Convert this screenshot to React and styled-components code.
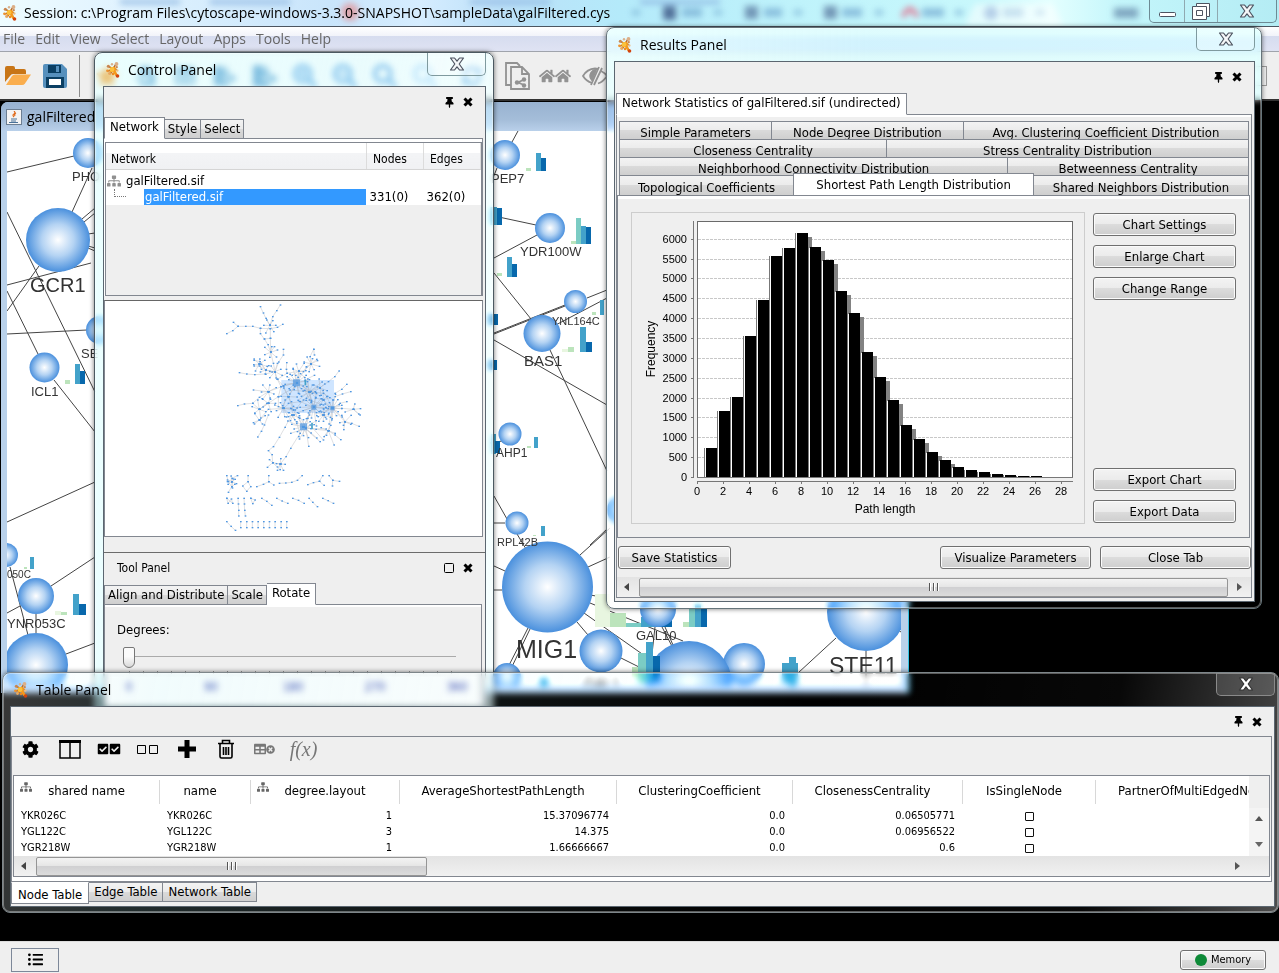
import React from "react";
import styled, { createGlobalStyle, css } from "styled-components";
import {
  FaCog, FaListUl, FaThumbtack, FaSitemap, FaCheckSquare,
  FaTable, FaTimesCircle, FaHome, FaSearchPlus, FaSearchMinus, FaSearch,
  FaSyncAlt, FaFileImport, FaFileExport, FaStar,
} from "react-icons/fa";

const ui = `"DejaVu Sans Condensed", "DejaVu Sans", sans-serif`;
const segoe = `"Open Sans", "Noto Sans", sans-serif`;
const line = "#828790";

const Global = createGlobalStyle`
  * { box-sizing: border-box; }
  body { margin: 0; background: #000; font: 13px/16px ${ui}; font-stretch: condensed; color: #000; }
  button { font: inherit; color: inherit; padding: 0; border: 0; background: none; }
  svg { display: block; }
`;

/* ---------- shell ---------- */
const Shell = styled.div`
  position: relative;
  display: flex;
  flex-direction: column;
  min-height: 100vh;
  overflow: hidden;
`;
const TitleBar = styled.header`
  position: relative;
  display: flex;
  align-items: center;
  height: 27px;
  padding-left: 3px;
  border-bottom: 1px solid #4c5560;
  background: linear-gradient(90deg, #eefcff 0, #e4f5ff 90px, #c9e5fb 330px, #d6edff 420px, #bce0f8 500px, #b4eafa 620px, #bff3fb 800px, #c8f8fc 980px, #e4ffff 1050px, #c4f6fb 1120px, #b4ecf4 100%);
  overflow: hidden;
`;
const TitleGlow = styled.svg`
  position: absolute;
  left: 0;
  top: 0;
  width: 1279px;
  height: 26px;
  filter: blur(3px);
`;
const TitleText = styled.h1`
  position: relative;
  margin: 0 0 0 7px;
  font: 400 14px/28px ${segoe};
  white-space: nowrap;
`;
const Caption = styled.div`
  position: relative;
  align-self: flex-start;
  display: flex;
  margin: 0 2px 0 auto;
  height: 23px;
  border: 1px solid #6d8a94;
  border-top: 0;
  border-radius: 0 0 5px 5px;
`;
const CaptionButton = styled.button`
  display: grid;
  place-items: center;
  width: ${(p) => p.$w}px;
  & + & { border-left: 1px solid #8fa9b0; }
`;
const MenuBar = styled.nav`
  display: flex;
  gap: 10px;
  height: 25px;
  padding: 0 3px;
  border-bottom: 1px solid #a0a4ac;
  background: linear-gradient(#fff 0, #f1f3fa 9px, #d6dcef 9px, #dfe3f3 100%);
`;
const MenuItem = styled.button`
  font: 14px/24px ${segoe};
  color: #666;
`;
const ToolBar = styled.div`
  display: flex;
  align-items: center;
  height: 49px;
  padding-left: 5px;
  border-bottom: 2px solid #333;
  background: #efefef;
`;
const ToolButton = styled.button`
  display: flex;
  align-items: center;
  justify-content: center;
  width: ${(p) => p.$w || 40}px;
  height: 32px;
  color: ${(p) => p.$c || "#929292"};
`;
const Separator = styled.span`
  width: 1px;
  height: 42px;
  margin: 0 8px 0 0;
  background: #8c8c8c;
`;
const SearchBox = styled.input`
  width: 120px;
  height: 20px;
  margin: 0 12px 0 auto;
  border: 1px solid #9a9a9a;
  background: #efefef;
`;
const Desktop = styled.main`
  flex: 1;
  position: relative;
  background: #000;
`;
const StatusBar = styled.footer`
  display: flex;
  align-items: center;
  justify-content: space-between;
  height: 32px;
  padding: 4px 13px 0 11px;
  border-top: 1px solid #dcdcdc;
  background: #efefef;
`;
const ListButton = styled.button`
  display: grid;
  place-items: center;
  width: 48px;
  height: 24px;
  border: 1px solid #7d8899;
  font-size: 15px;
`;
const PushButton = styled.button`
  display: flex;
  align-items: center;
  justify-content: center;
  gap: 4px;
  width: ${(p) => p.$w}px;
  height: ${(p) => p.$h || 23}px;
  border: 1px solid #707070;
  border-radius: 3px;
  box-shadow: inset 0 0 0 1px #fbfbfb;
  background: linear-gradient(#f3f3f3, #ebebeb 50%, #dcdcdc 50%, #cecece);
  font-size: ${(p) => p.$fs || 13}px;
`;
const Dot = styled.span`
  width: 12px;
  height: 12px;
  border-radius: 50%;
  background: #0e8a38;
`;

/* ---------- network frame ---------- */
const Frame = styled.section`
  position: absolute;
  left: 1px;
  top: 1px;
  width: 908px;
  padding: 0 7px 7px 6px;
  border-right: 1px solid #35c3e4;
  border-radius: 7px 0 0 0;
  background: #b9d1ea;
`;
const FrameTitle = styled.div`
  display: flex;
  align-items: center;
  gap: 5px;
  height: 29px;
  margin: 0 -7px 0 -6px;
  padding-left: 5px;
  border-radius: 7px 0 0 0;
  background: linear-gradient(#98b2d0, #a4bdd9 60%, #b9d0ea);
  font: 14px/28px ${segoe};
`;
const JavaBox = styled.span`
  display: grid;
  place-items: center;
  width: 16px;
  height: 16px;
  border: 1px solid #6d7f93;
  background: #f4f4f4;
`;

/* ---------- floating windows ---------- */
const FloatWindow = styled.section`
  position: absolute;
  left: ${(p) => p.$x}px;
  top: ${(p) => p.$y}px;
  ${(p) => (p.$w ? css`width: ${p.$w}px;` : css`right: 0;`)}
  height: ${(p) => p.$h}px;
  display: flex;
  flex-direction: column;
  padding: 0 ${(p) => p.$pr}px ${(p) => p.$pb}px ${(p) => p.$pl}px;
  border: 1px solid ${(p) => p.$edge};
  border-radius: 8px;
  background: ${(p) => p.$tint};
  backdrop-filter: blur(3px) saturate(1.3) brightness(1.06);
  box-shadow: inset 0 0 0 1px rgba(255, 255, 255, 0.35), 0 0 5px rgba(0, 0, 0, 0.55);
`;
const WinTitle = styled.div`
  display: flex;
  height: 33px;
  flex: none;
  padding-left: ${(p) => p.$l}px;
`;
const WinIcon = styled.span`
  display: flex;
  align-items: center;
  height: 34px;
`;
const WinName = styled.h2`
  margin: 0 auto 0 8px;
  font: 400 14px/34px ${segoe};
`;
const WinClose = styled.button`
  display: grid;
  place-items: center;
  width: 59px;
  height: 23px;
  border: 1px solid ${(p) => (p.$dark ? "#8a8a8a" : "#7f9a9f")};
  border-top: 0;
  border-radius: 0 0 5px 5px;
  background: ${(p) => (p.$dark ? "rgba(255,255,255,.14)" : "rgba(255,255,255,.25)")};
`;
const WinBody = styled.div`
  display: flex;
  flex-direction: column;
  flex: 1;
  min-height: 0;
  border: 1px solid #5b6670;
  background: #efefef;
  overflow: hidden;
`;
const PanelHead = styled.div`
  display: flex;
  align-items: center;
  gap: 9px;
  height: ${(p) => (p.$short ? 29 : 30)}px;
  flex: none;
  padding: 0 12px 0 13px;
`;
const PanelName = styled.span`
  margin-right: auto;
  font-size: 12px;
`;
const SmallButton = styled.button`
  display: grid;
  place-items: center;
  width: 10px;
  height: 12px;
`;
const Tabs = styled.div`
  position: relative;
  z-index: 1;
  display: flex;
  align-items: ${(p) => (p.$down ? "flex-start" : "flex-end")};
  height: ${(p) => (p.$tall ? 23 : 22)}px;
  flex: none;
  margin-bottom: ${(p) => (p.$down ? 0 : -1)}px;
  padding-left: ${(p) => (p.$tall ? 1 : 0)}px;
`;
const Tab = styled.button`
  height: ${(p) => (p.$on ? 22 : 20)}px;
  padding: ${(p) => (p.$on ? "0 5px 2px" : "0 3px")};
  border: 1px solid ${line};
  white-space: nowrap;
  background: linear-gradient(#f3f3f3, #ebebeb 50%, #dadada 50%, #cfcfcf);
  & + & { border-left: ${(p) => (p.$on ? `1px solid ${line}` : "0")}; }
  ${(p) => p.$on && css`background: #fff; border-bottom-color: #fff;`}
  ${(p) => p.$down && css`padding: 0 5px;`}
  ${(p) => p.$down && p.$on && css`padding: 3px 6px 0; border-color: #fff ${line} ${line};`}
`;

/* control panel */
const TreePane = styled.div`
  height: 158px;
  flex: none;
  margin-right: 2px;
  padding: 3px 0 0 1px;
  border: 1px solid ${line};
  border-width: 1px 1px 0 0;
  background: #fff;
`;
const TreeBox = styled.div`
  height: 154px;
  border: 1px solid ${line};
  background: #efefef;
`;
const TreeTable = styled.table`
  width: 100%;
  table-layout: fixed;
  border-collapse: collapse;
  background: #fff;
  th { height: 26px; padding: 6px 5px 0; text-align: left; font-size: 12px; font-weight: 400; border-right: 1px solid #dcdcdc; border-bottom: 1px solid #d5d5d5; background: linear-gradient(#fff 40%, #f3f4f6 40%, #f0f1f3); }
  th + th { padding-left: 6px; }
  td { height: 16px; padding: 0 1px; line-height: 16px; }
  td + td { padding-left: 3px; }
  tbody tr:first-child td { height: 19px; padding-top: 3px; }
`;
const TreeItem = styled.span`
  display: flex;
  align-items: center;
  gap: 5px;
`;
const TreeLeaf = styled.span`
  display: block;
  margin-left: 37px;
  padding-left: 1px;
  background: #3399ff;
  color: #fff;
`;
const Stub = styled.i`
  position: absolute;
  width: 12px;
  height: 8px;
  margin-left: 7px;
  border-left: 1px dotted #777;
  border-bottom: 1px dotted #777;
`;
const MapPane = styled.div`
  height: 237px;
  flex: none;
  margin: 4px 2px 0 0;
  padding: 1px 0 0 115px;
  border: 1px solid ${line};
  border-top: 1px solid #666;
  background: #fff;
`;
const ToolPanel = styled.div`
  margin-top: 15px;
  border-top: 1px solid #6b6b6b;
`;
const ToolPane = styled.div`
  height: 140px;
  margin-right: 3px;
  padding: 17px 24px 0 12px;
  border: 1px solid ${line};
  box-shadow: inset 0 2px #fff;
`;
const RangeInput = styled.input`
  display: block;
  appearance: none;
  width: 337px;
  height: 24px;
  margin: 7px 0 0 6px;
  background: linear-gradient(#aaa, #aaa) 6px 11px / 327px 1px no-repeat;
  &::-webkit-slider-thumb {
    appearance: none;
    width: 12px;
    height: 21px;
    background: linear-gradient(#fbfbfb 45%, #d9d9d9);
    border: 1px solid #777;
    border-radius: 2px 2px 6px 6px;
  }
`;
const Ticks = styled.div`
  display: flex;
  justify-content: space-between;
  width: 352px;
  margin-top: 2px;
  padding-top: 8px;
  background: repeating-linear-gradient(90deg, #999 0 1px, transparent 1px 14px) 12px 0 / 330px 3px no-repeat;
  color: #1c2a80;
  font-size: 12px;
  span { width: 24px; text-align: center; }
`;

/* results panel */
const ResultPane = styled.div`
  display: flex;
  flex-direction: column;
  flex: 1;
  margin: 0 2px 3px 1px;
  padding-top: 5px;
  border: 1px solid ${line};
  box-shadow: inset 0 2px #fff;
`;
const StatRows = styled.div`
  position: relative;
  z-index: 1;
  margin: 1px 2px 0;
`;
const StatRow = styled.div`
  display: flex;
  height: ${(p) => (p.$last ? 20 : 18)}px;
`;
const StatTab = styled.button`
  flex: ${(p) => p.$w} 1 0;
  min-width: 0;
  padding-top: 3px;
  line-height: 15px;
  border: 1px solid ${line};
  border-bottom: 0;
  background: linear-gradient(#f3f3f3, #ebebeb 50%, #dadada 50%, #cfcfcf);
  white-space: nowrap;
  overflow: hidden;
  & + & { border-left: 1px solid ${line}; margin-left: -1px; }
  ${(p) => p.$on && css`margin-top: -2px; padding-bottom: 3px; background: #fff;`}
`;
const StatPane = styled.div`
  display: flex;
  gap: 8px;
  height: 343px;
  margin: 0 1px 0 0;
  padding: 16px 12px 0 13px;
  border: 1px solid ${line};
  box-shadow: inset 0 3px #fff;
`;
const ButtonColumn = styled.div`
  display: flex;
  flex-direction: column;
  gap: 9px;
  padding-top: 1px;
  height: 311px;
`;
const Grow = styled.div`
  flex: 1;
`;
const Footer = styled.div`
  display: flex;
  align-items: center;
  gap: 9px;
  height: 39px;
  padding-left: 1px;
`;
const HScroll = styled.div`
  display: flex;
  align-items: center;
  height: 20px;
  padding: 0 9px 0 7px;
  background: linear-gradient(#e3e3e3, #f1f1f1);
`;
const Arrow = styled.i`
  width: 0;
  height: 0;
  border: 4px solid transparent;
  ${(p) => p.$d === "l" && css`border-right: 5px solid #444; border-left: 0;`}
  ${(p) => p.$d === "r" && css`border-left: 5px solid #555; border-right: 0; margin-left: auto; margin-right: ${p.$in || 0}px;`}
  ${(p) => p.$d === "u" && css`border-bottom: 5px solid #555; border-top: 0;`}
  ${(p) => p.$d === "d" && css`border-top: 5px solid #666; border-bottom: 0;`}
`;
const Thumb = styled.div`
  display: flex;
  align-items: center;
  justify-content: center;
  gap: 2px;
  width: ${(p) => p.$w}px;
  height: 19px;
  margin: 0 9px 0 10px;
  border: 1px solid #959595;
  border-radius: 2px;
  background: linear-gradient(#f3f3f3, #e6e6e6 45%, #d0d0d2 50%, #dcdcdc);
  i { width: 2px; height: 8px; border-left: 1px solid #555; background: #fff; }
`;

/* table panel */
const TablePane = styled.div`
  display: flex;
  flex-direction: column;
  margin: 0 2px 0 0;
  border: 1px solid ${line};
  height: 146px;
  flex: none;
  padding: 0 1px;
  box-shadow: inset 0 -5px #fff;
`;
const IconRow = styled.div`
  display: flex;
  align-items: center;
  height: 38px;
  padding: 0 0 14px 4px;
`;
const IconBtn = styled.button`
  display: flex;
  align-items: center;
  justify-content: center;
  width: 39px;
  height: 24px;
  padding-right: 12px;
  color: ${(p) => p.$c || "#000"};
`;
const Fx = styled.span`
  font: italic 20px/22px "Liberation Serif", serif;
`;
const GridBox = styled.div`
  height: 102px;
  border: 1px solid ${line};
  background: #fff;
`;
const GridRow = styled.div`
  display: flex;
  height: 80px;
`;
const GridClip = styled.div`
  flex: 1;
  min-width: 0;
  overflow: hidden;
`;
const DataTable = styled.table`
  width: 100%;
  table-layout: fixed;
  border-collapse: collapse;
  th { height: 32px; padding: 0 10px 0 0; font-weight: 400; white-space: nowrap; position: relative; }
  th:last-child { padding: 0 0 0 22px; text-align: left; }
  th > svg { position: absolute; left: 6px; top: 5px; color: #666; }
  td { height: 16px; padding: 0 8px 0 7px; font-size: 11px; line-height: 16px; text-align: right; }
  td:nth-child(-n+2) { text-align: left; }
  td:nth-child(7) { text-align: center; padding: 0; }
`;
const HeadLabel = styled.div`
  height: 24px;
  margin-right: -10px;
  padding-right: ${(p) => (p.$icon ? 0 : 10)}px;
  border-right: ${(p) => (p.$last ? 0 : 1)}px solid #d8d8d8;
  line-height: 22px;
`;
const Tick = styled.input`
  appearance: none;
  display: block;
  width: 9px;
  height: 9px;
  margin: 0 auto;
  border: 1px solid #111;
  border-radius: 1px;
  background: #fff;
`;
const VScroll = styled.div`
  display: flex;
  flex-direction: column;
  justify-content: space-between;
  align-items: center;
  width: 20px;
  padding: 40px 0 9px;
  background: linear-gradient(#efefef 32px, #f4f4f4 32px);
`;

/* ---------- drawings ---------- */
const LogoSvg = styled.svg`
  flex: none;
`;
const Logo = () => (
  <LogoSvg width="14" height="16" viewBox="0 0 14 16">
    <path d="M2 4l5 3 3-5M7 8l-6 1M7 8l-3 4M7 8l4.500 6M7 7l4 1" stroke="#b86a2a" strokeWidth="1.500" fill="none" />
    <path d="M3.500 7.500l4-3 3 1.500-1 2.500 2.500 5-2.500.500-2.500-4-3 .500z" fill="#f59a1d" />
    <circle cx="6" cy="7.500" r="2.400" fill="#fbc23c" />
    <circle cx="2.300" cy="4.200" r="1.500" fill="#c98650" />
    <circle cx="6" cy="2.200" r="1.200" fill="#d9b08c" />
    <circle cx="10.500" cy="2" r="1.900" fill="#dcae86" />
    <circle cx="10.800" cy="5.200" r="1.100" fill="#c98650" />
    <circle cx="1.500" cy="8.800" r="1.400" fill="#ee9330" />
    <circle cx="3.500" cy="11.500" r="1.400" fill="#e8a860" />
    <circle cx="7" cy="12" r="1.200" fill="#ee8a20" />
    <circle cx="11.500" cy="14" r="1.800" fill="#d2440e" />
    <circle cx="11.300" cy="8.500" r="1.200" fill="#ecc08a" />
  </LogoSvg>
);
const CloseX = ({ dark }) => (
  <svg width="16" height="14" viewBox="0 0 16 14">
    <path d="M1.5 1h4L8 4.2 10.500 1h4L10.200 7l4.300 6h-4L8 9.800 5.500 13h-4L5.800 7z" fill={dark ? "#fff" : "#f4f6f8"} stroke={dark ? "#333" : "#4d5360"} strokeWidth="1.2" strokeLinejoin="round" />
  </svg>
);
const PinAndClose = ({ dock }) => (
  <>
    <SmallButton aria-label={dock ? "Float" : "Pin"}>
      {dock ? (
        <svg width="10" height="10"><rect x=".5" y=".5" width="9" height="9" rx="1" fill="none" stroke="#000" /></svg>
      ) : (
        <FaThumbtack size={11} />
      )}
    </SmallButton>
    <SmallButton aria-label="Close">
      <svg width="10" height="10" viewBox="0 0 10 10"><path d="M1.500 1.500l7 7M8.500 1.500l-7 7" stroke="#000" strokeWidth="3" /></svg>
    </SmallButton>
  </>
);

const edges = [
  [7, 172, 74, 156], [72, 212, 92, 168], [7, 212, 95, 392], [7, 291, 38, 354], [7, 311, 39, 266], [7, 285, 91, 263],
  [7, 334, 87, 330], [54, 380, 95, 432], [7, 522, 95, 482], [82, 219, 95, 208], [84, 222, 95, 213], [88, 234, 95, 233],
  [88, 246, 95, 248], [88, 248, 95, 251], [10, 567, 28, 635], [51, 586, 95, 557], [7, 613, 20, 606], [36, 614, 36, 633], [66, 654, 95, 643],
  [512, 142, 518, 131], [497, 168, 493, 178], [494, 216, 536, 225], [494, 258, 537, 235], [494, 273, 531, 319], [494, 333, 565, 305], [494, 334, 565, 306],
  [587, 298, 607, 290], [550, 328, 607, 298], [494, 340, 607, 405], [550, 350, 607, 471], [494, 496, 507, 519], [494, 523, 505, 523], [590, 545, 607, 529],
  [517, 534, 526, 549], [580, 555, 610, 528], [588, 567, 610, 557], [494, 566, 505, 571], [494, 590, 502, 590], [590, 595, 596, 596],
  [590, 603, 683, 641], [584, 613, 645, 656], [577, 622, 588, 635], [528, 628, 504, 675], [530, 629, 508, 675], [655, 627, 648, 690],
  [665, 627, 673, 645], [662, 627, 674, 650], [621, 658, 645, 670], [836, 638, 798, 673], [866, 651, 866, 692], [898, 630, 901, 632], [490, 443, 502, 441],
];
const nodes = [
  [88, 153, 15], [58, 240, 32], [44.500, 367.500, 15], [100, 330, 14], [6, 555, 12], [36, 596, 18], [36, 665, 32],
  [505, 155, 15], [550, 228, 15], [575.500, 301.500, 11.500], [542, 333.500, 18.500], [510, 434, 11.500], [517, 523, 11.500], [621, 510, 14],
  [547.500, 587, 45.500], [601, 651, 21.500], [507, 677, 14], [658, 609, 18], [744, 664, 21], [689, 684, 43], [866, 612, 39],
];
const G0 = "#e8f6e0", G1 = "#bce4bc", G2 = "#7bccc4", G3 = "#43a2ca", G4 = "#0868ac";
const bars = [
  [65, 380, 5, 4, G1], [75, 364, 5, 20, G3], [80, 371, 5, 13, G4], [24, 567, 3, 2, G1], [30, 557, 4, 12, G3],
  [55, 611, 6, 4, G0], [61, 612, 6, 3, G1], [73, 594, 6, 21, G3], [79, 604, 7, 11, G4],
  [526, 168, 5, 3, G1], [536, 153, 5, 18, G3], [541, 158, 5, 13, G4],
  [571, 241, 5, 3, G1], [576, 218, 5, 26, G2], [581, 226, 5, 18, G3], [586, 227, 5, 17, G4],
  [490, 207, 7, 18, G3], [497, 208, 5, 17, G4], [497, 273, 5, 3, G1], [507, 257, 5, 20, G3], [512, 264, 5, 13, G4],
  [592, 312, 4, 3, G1], [600, 300, 4, 15, G3], [562, 349, 6, 3, G0], [568, 347, 6, 5, G1], [580, 327, 6, 25, G3], [586, 342, 6, 10, G4],
  [488, 314, 10, 11, G4], [488, 360, 9, 10, G4], [491, 434, 5, 20, G3], [495, 441, 5, 12, G4], [527, 446, 4, 2, G1], [534, 437, 4, 11, G3],
  [533, 535, 3, 1, G1], [541, 526, 4, 10, G3], [595, 594, 15, 33, G0], [610, 613, 16, 14, G1], [626, 623, 15, 4, G2], [641, 617, 15, 10, G3], [656, 618, 16, 9, G4],
  [683, 622, 6, 5, G1], [689, 609, 6, 18, G2], [695, 604, 6, 23, G3], [701, 609, 6, 18, G4],
];
const frontBars = [
  [632, 667, 7, 10, G1], [638, 653, 8, 30, G2], [646, 642, 7, 40, G3], [653, 656, 7, 25, G4], [782, 663, 16, 20, G3], [789, 657, 7, 30, G3], [540, 678, 8, 12, G3],
];
const labels = [
  [72, 181, 13, "PHO"], [30, 292, 20, "GCR1"], [31, 396, 13, "ICL1"], [81, 358, 13, "SE"], [7, 578, 10, "050C"], [7, 628, 13, "YNR053C"],
  [491, 183, 13, "PEP7"], [520, 256, 13, "YDR100W"], [552, 325, 11, "YNL164C"], [524, 366, 15, "BAS1"], [496, 457, 12, "AHP1"],
  [497, 546, 11, "RPL42B"], [516, 658, 25, "MIG1"], [636, 640, 13, "GAL10"], [829, 674, 23, "STE11"], [584, 688, 14, "GAL1"],
];
const Bar = ([x, y, w, h, c], i) => <rect key={i} x={x} y={y} width={w} height={h} fill={c} />;
const CanvasSvg = styled.svg`
  background: #fff;
`;
const NetworkCanvas = () => (
  <CanvasSvg width="894" height="555" viewBox="7 131 894 555">
    <defs>
      <radialGradient id="ball">
        <stop offset="0" stopColor="#fff" />
        <stop offset=".5" stopColor="#b4d3f3" />
        <stop offset="1" stopColor="#4a90dd" />
      </radialGradient>
    </defs>
    <g stroke="#444" strokeWidth="1">
      {edges.map(([a, b, c, d], i) => <line key={i} x1={a} y1={b} x2={c} y2={d} />)}
    </g>
    {bars.map(Bar)}
    {nodes.map(([x, y, r], i) => <circle key={i} cx={x} cy={y} r={r} fill="url(#ball)" />)}
    {frontBars.map(Bar)}
    <g fill="#333" fontFamily="Liberation Sans, Arial, sans-serif">
      {labels.map(([x, y, s, t]) => <text key={t} x={x} y={y} fontSize={s}>{t}</text>)}
    </g>
  </CanvasSvg>
);

/* birds-eye view: chains of linked nodes, then hubs with leaves around them */
const chains = [
  "20,101 38,92 54,79 77,79 98,79 121,85 150,86 172,82 188,73", "54,79 40,67", "121,20 130,39 140,60 150,76 158,50 170,32 181,15",
  "121,85 121,101 133,117 151,115 151,86", "133,117 144,134 152,157 160,190 165,215 172,238 190,258", "152,157 163,140", "151,115 152,157",
  "58,218 80,222 104,224 135,222 165,215", "102,181 120,185 137,210 165,215", "102,198 118,198 137,210", "165,215 176,186 190,165 190,148",
  "200,188 199,208 201,220 172,238", "236,214 201,220", "281,148 270,170 273,192 290,178", "273,192 250,215 236,214 230,248", "281,148 283,165",
  "230,248 190,258 145,275 100,270", "145,275 118,292 98,310 73,312 53,317", "98,310 118,328 145,310 175,290", "100,368 118,360 145,328 190,325",
  "113,411 124,394 133,375 145,345", "190,325 205,350 215,345 195,382 178,412 160,440 145,452 156,464 158,488 142,502", "215,345 230,370 240,400 212,445 198,470 181,492 158,488",
  "181,492 172,511", "181,492 190,511", "250,381 220,330 190,325", "250,381 268,345 281,321", "250,381 288,388 325,392 345,405 362,419",
  "325,392 342,435", "325,392 335,360 337,325", "250,381 300,425", "270,375 310,420", "325,392 312,410", "337,325 365,325 400,328 420,345", "400,328 421,326", "337,325 360,310 380,305",
  "337,325 375,365 395,370 417,379", "375,365 370,376", "300,263 325,245 344,230 357,213", "300,263 270,275 230,248", "345,280 365,268 380,253",
  "345,290 367,282 392,275", "337,325 320,290 300,263", "281,321 337,325", "281,321 240,322 190,325", "281,321 268,275 255,240 283,226", "190,258 205,290 220,330",
  "175,290 210,270 268,275 310,280 340,300", "205,310 240,305 268,300 310,315", "225,330 250,300 285,275", "172,238 183,260 175,290 175,320 190,325",
  "110,560 130,553 146,545 146,527", "146,545 161,555", "178,550 197,549 215,547 232,541 246,527", "263,554 280,548 298,544 308,527", "298,544 312,556", "327,527 338,541 358,544", "338,541 337,558",
  "84,527 84,545 68,558 80,574 92,560 84,545", "20,527 25,545 35,560 25,577", "36,535 52,527", "22,545 40,537 35,560 44,553", "20,595 24,610 34,597 38,610 20,595",
  "54,595 55,612 56,631 56,648", "72,595 73,612 74,631 76,648", "92,595 98,611 105,600 92,595", "125,595 140,604 155,616", "170,595 186,603 203,610", "218,595 235,601 252,610", "267,595 278,607 292,620", "308,595 324,602 340,610",
  "20,665 33,679 46,691", ...[62, 80, 97, 114, 131, 148, 165, 183, 200].map((x) => `${x},665 ${x},683`),
].map((s) => s.split(" ").map((p) => p.split(",").map(Number)));
const hubs = [
  [150, 76, 22, 6], [152, 157, 20, 6], [165, 215, 22, 7], [118, 192, 20, 7], [137, 210, 18, 5], [236, 214, 24, 7], [273, 192, 22, 8], [145, 275, 24, 7], [118, 328, 24, 6], [145, 310, 22, 5],
  [190, 325, 26, 9], [230, 248, 30, 12], [230, 248, 46, 8], [281, 321, 28, 12], [281, 321, 48, 9], [337, 325, 26, 12], [337, 325, 40, 6], [250, 381, 30, 14], [258, 385, 50, 9], [268, 275, 26, 10], [268, 275, 44, 6], [205, 290, 30, 6],
  [310, 345, 20, 10], [325, 392, 20, 4], [375, 365, 22, 5], [400, 328, 22, 3], [118, 360, 20, 4], [181, 492, 16, 4], [158, 488, 16, 2], [300, 263, 24, 6], [310, 300, 24, 5], [220, 345, 20, 8], [35, 545, 16, 6],
];
const spokes = hubs.flatMap(([x, y, r, n], h) =>
  Array.from({ length: n }, (_, i) => {
    const a = (i / n) * 6.283 + h * 0.7;
    const d = r * (0.75 + ((i * 7 + h * 3) % 5) / 9);
    return [[x, y], [Math.round(x + d * Math.cos(a)), Math.round(y + d * Math.sin(a))]];
  })
);
const BirdsEye = () => (
  <svg width="150" height="232" viewBox="0 6 450 696">
    <rect x="184" y="240" width="158" height="99" fill="#cfe5ff" />
    <g fill="none" stroke="#9a9fa6" strokeWidth="1.600" opacity=".6">
      {[...chains, ...spokes].map((c, i) => <polyline key={i} points={c.map((p) => p.join(",")).join(" ")} />)}
    </g>
    <g fill="#4f97e2">
      {[...chains, ...spokes].flatMap((c, i) => c.map(([x, y], j) => <rect key={`${i}-${j}`} x={x - 2} y={y - 2} width="5" height="4" />))}
      <path d="M219 238h21v21h-21zM240 370h21v21h-21zM274 314h15v15h-15zM331 318h13v13h-13z" opacity=".7" />
    </g>
    <path d="M276 368v20" stroke="#43a2ca" strokeWidth="5" />
    <path d="M256 240v16" stroke="#43a2ca" strokeWidth="5" />
  </svg>
);

const freq = [718, 1665, 2015, 3560, 4450, 5566, 5776, 6140, 5802, 5466, 4693, 4139, 3140, 2519, 1940, 1317, 957, 622, 428, 252, 184, 126, 80, 55, 35, 22, 12, 8];
const ChartSvg = styled.svg`
  flex: none;
  border: 1px solid #cdcdcd;
`;
const Histogram = () => {
  const y = (v) => 477 - Math.round(v * 0.0397);
  const x = (k) => 704 + 13 * k;
  return (
    <ChartSvg width="454" height="312" viewBox="632 213 452 310">
      <rect x="697.5" y="221.5" width="375" height="256" fill="#fff" stroke="#6a6a6a" />
      <g stroke="#c8c8c8" strokeDasharray="3 1">
        {Array.from({ length: 12 }, (_, i) => <line key={i} x1="698" x2="1072" y1={y((i + 1) * 500) + 0.5} y2={y((i + 1) * 500) + 0.5} />)}
      </g>
      {freq.map((v, k) => v > 100 && <rect key={k} x={x(k) + 4} y={y(v) + 4} width="13" height={Math.max(0, 473 - y(v))} fill="#828282" />)}
      {freq.map((v, k) => (
        <g key={k}>
          <rect x={x(k)} y={y(v)} width="1" height={477 - y(v)} fill="#777" />
          <rect x={x(k) + 1} y={y(v) + 1} width="1" height={477 - y(v)} fill="#fff" />
          <rect x={x(k) + 2} y={y(v)} width="11" height={477 - y(v)} fill="#000" />
        </g>
      ))}
      <path d="M693.500 221v257M697 481.500h376M697 477.500h376" stroke="#777" fill="none" />
      <g fontFamily="Liberation Sans, Arial, sans-serif" fontSize="11">
        {Array.from({ length: 13 }, (_, i) => (
          <g key={i}>
            <path d={`M691 ${y(i * 500) + 0.5}h3`} stroke="#777" />
            <text x="687" y={y(i * 500) + 4} textAnchor="end">{i * 500}</text>
          </g>
        ))}
        {Array.from({ length: 15 }, (_, i) => (
          <g key={i}>
            <path d={`M${697.5 + i * 26} 482v2`} stroke="#777" />
            <text x={697 + i * 26} y="495" textAnchor="middle">{i * 2}</text>
          </g>
        ))}
        <text x="885" y="513" textAnchor="middle" fontSize="12">Path length</text>
        <text transform="translate(655 349) rotate(-90)" textAnchor="middle" fontSize="12">Frequency</text>
      </g>
    </ChartSvg>
  );
};

const statRows = [
  [["Simple Parameters", 152], ["Node Degree Distribution", 192], ["Avg. Clustering Coefficient Distribution", 286]],
  [["Closeness Centrality", 267], ["Stress Centrality Distribution", 362]],
  [["Neighborhood Connectivity Distribution", 389], ["Betweenness Centrality", 241]],
  [["Topological Coefficients", 174], ["Shortest Path Length Distribution", 240, true], ["Shared Neighbors Distribution", 215]],
];
const columns = [["shared name", 146, true], ["name", 91], ["degree.layout", 149, true], ["AverageShortestPathLength", 217], ["ClusteringCoefficient", 176], ["ClosenessCentrality", 170], ["IsSingleNode", 133], ["PartnerOfMultiEdgedNo"]];
const rows = [
  ["YKR026C", "1", "15.37096774", "0.0", "0.06505771"],
  ["YGL122C", "3", "14.375", "0.0", "0.06956522"],
  ["YGR218W", "1", "1.66666667", "0.0", "0.6"],
];
const Grip = () => <><i /><i /><i /></>;

const WindowTitle = ({ name, dark, indent }) => (
  <WinTitle $l={indent}>
    <WinIcon><Logo /></WinIcon>
    <WinName>{name}</WinName>
    <WinClose $dark={dark} aria-label="Close window"><CloseX dark={dark} /></WinClose>
  </WinTitle>
);

const ControlPanel = () => (
  <FloatWindow $x={94} $y={52} $w={400} $h={664} $pl={8} $pr={7} $pb={7} $edge="#4b5961" $tint="linear-gradient(100deg, rgba(215,255,255,.5), rgba(190,250,255,.3) 50%, rgba(240,255,255,.55))">
    <WindowTitle name="Control Panel" indent={3} />
    <WinBody>
      <PanelHead>
        <PanelName />
        <PinAndClose />
      </PanelHead>
      <Tabs><Tab $on>Network</Tab><Tab>Style</Tab><Tab>Select</Tab></Tabs>
      <TreePane>
        <TreeBox>
          <TreeTable>
            <colgroup><col /><col width="57" /><col width="57" /></colgroup>
            <thead><tr><th>Network</th><th>Nodes</th><th>Edges</th></tr></thead>
            <tbody>
              <tr><td><TreeItem><FaSitemap size={14} color="#909090" />galFiltered.sif</TreeItem></td><td /><td /></tr>
              <tr><td><Stub /><TreeLeaf>galFiltered.sif</TreeLeaf></td><td>331(0)</td><td>362(0)</td></tr>
            </tbody>
          </TreeTable>
        </TreeBox>
      </TreePane>
      <MapPane><BirdsEye /></MapPane>
      <ToolPanel>
        <PanelHead><PanelName>Tool Panel</PanelName><PinAndClose dock /></PanelHead>
        <Tabs><Tab>Align and Distribute</Tab><Tab>Scale</Tab><Tab $on>Rotate</Tab></Tabs>
        <ToolPane>
          <label htmlFor="deg">Degrees:</label>
          <RangeInput id="deg" type="range" min="0" max="360" defaultValue="0" />
          <Ticks>{[0, 90, 180, 270, 360].map((n) => <span key={n}>{n}</span>)}</Ticks>
        </ToolPane>
      </ToolPanel>
    </WinBody>
  </FloatWindow>
);

const ResultsPanel = () => (
  <FloatWindow $x={606} $y={27} $w={656} $h={582} $pl={7} $pr={6} $pb={6} $edge="#66747a" $tint="linear-gradient(90deg, rgba(225,255,255,.65), rgba(190,248,252,.5) 40%, rgba(200,255,255,.5)) 0 0 / 100% 72px no-repeat">
    <WindowTitle name="Results Panel" indent={4} />
    <WinBody>
      <PanelHead>
        <PanelName />
        <PinAndClose />
      </PanelHead>
      <Tabs $tall><Tab $on>Network Statistics of galFiltered.sif (undirected)</Tab></Tabs>
      <ResultPane>
        <StatRows>
          {statRows.map((r, i) => (
            <StatRow key={i} $last={i === 3}>
              {r.map(([t, w, on]) => <StatTab key={t} $w={w} $on={on}>{t}</StatTab>)}
            </StatRow>
          ))}
        </StatRows>
        <StatPane>
          <Histogram />
          <ButtonColumn>
            <PushButton $w={143}>Chart Settings</PushButton>
            <PushButton $w={143}>Enlarge Chart</PushButton>
            <PushButton $w={143}>Change Range</PushButton>
            <Grow />
            <PushButton $w={143}>Export Chart</PushButton>
            <PushButton $w={143}>Export Data</PushButton>
          </ButtonColumn>
        </StatPane>
        <Footer>
          <PushButton $w={113}>Save Statistics</PushButton>
          <Grow />
          <PushButton $w={151}>Visualize Parameters</PushButton>
          <PushButton $w={151}>Close Tab</PushButton>
        </Footer>
        <HScroll><Arrow $d="l" /><Thumb $w={589}><Grip /></Thumb><Arrow $d="r" /></HScroll>
      </ResultPane>
    </WinBody>
  </FloatWindow>
);

const TablePanel = () => (
  <FloatWindow $x={2} $y={672} $h={241} $pl={7} $pr={3} $pb={5} $edge="#7d868a" $tint="linear-gradient(100deg, rgba(255,255,255,.22), rgba(190,250,255,.18) 160px, rgba(190,250,255,.08) 480px, rgba(0,0,0,0) 800px, rgba(255,255,255,.03) 85%, rgba(255,255,255,.3))">
    <WindowTitle name="Table Panel" dark indent={4} />
    <WinBody>
      <PanelHead $short>
        <PanelName />
        <PinAndClose />
      </PanelHead>
      <TablePane>
        <IconRow>
          <IconBtn aria-label="Settings"><FaCog size={17} /></IconBtn>
          <IconBtn aria-label="Columns"><svg width="22" height="20"><path d="M1 2h20v17H1zM11 2v17" fill="none" stroke="#000" strokeWidth="1.500" /><path d="M0 1h22v3H0z" /></svg></IconBtn>
          <IconBtn aria-label="Select all"><FaCheckSquare size={12} /><FaCheckSquare size={12} /></IconBtn>
          <IconBtn aria-label="Select none"><svg width="22" height="9"><path d="M.500.500h8v8h-8zM12.500.500h8v8h-8z" fill="none" stroke="#000" /></svg></IconBtn>
          <IconBtn aria-label="Add"><svg width="18" height="18"><path d="M9 0v18M0 9h18" stroke="#000" strokeWidth="5" /></svg></IconBtn>
          <IconBtn aria-label="Delete"><svg width="18" height="20" viewBox="0 0 18 20"><path d="M1 4.500h16M5.500 4V1.500h7V4M3 5v12.500q0 1.500 1.500 1.500h9q1.500 0 1.500-1.500V5M6.500 8v8M9 8v8M11.500 8v8" fill="none" stroke="#000" strokeWidth="1.600" /></svg></IconBtn>
          <IconBtn aria-label="Delete table" $c="#777"><FaTable size={12} /><FaTimesCircle size={9} /></IconBtn>
          <IconBtn aria-label="Function" $c="#777"><Fx>f(x)</Fx></IconBtn>
        </IconRow>
        <GridBox>
          <GridRow>
            <GridClip>
              <DataTable>
                <colgroup>{columns.map(([n, w]) => <col key={n} width={w} />)}</colgroup>
                <thead><tr>{columns.map(([n, w, icon]) => <th key={n}>{icon && <FaSitemap size={12} />}<HeadLabel $icon={icon} $last={!w}>{n}</HeadLabel></th>)}</tr></thead>
                <tbody>
                  {rows.map(([n, ...v]) => (
                    <tr key={n}><td>{n}</td><td>{n}</td>{v.map((t, i) => <td key={i}>{t}</td>)}<td><Tick type="checkbox" aria-label={`${n} is single node`} /></td><td /></tr>
                  ))}
                </tbody>
              </DataTable>
            </GridClip>
            <VScroll><Arrow $d="u" /><Arrow $d="d" /></VScroll>
          </GridRow>
          <HScroll><Arrow $d="l" /><Thumb $w={391}><Grip /></Thumb><Arrow $d="r" $in={20} /></HScroll>
        </GridBox>
      </TablePane>
      <Tabs $down><Tab $on $down>Node Table</Tab><Tab $down>Edge Table</Tab><Tab $down>Network Table</Tab></Tabs>
    </WinBody>
  </FloatWindow>
);

export default function App() {
  return (
    <Shell>
      <Global />
      <TitleBar>
        <TitleGlow viewBox="0 0 1279 26">
          <ellipse cx="350" cy="12" rx="9" ry="9" fill="#dca6ae" />
          <path d="M120 0h60v4h-60zM210 0h80v4h-80zM470 0h80v4h-80zM640 0h80v4h-80z" fill="#8fb8e2" />
          <g fill="#52719a">
            <rect x="663" y="6" width="13" height="14" /><rect x="745" y="6" width="13" height="13" opacity=".7" /><rect x="824" y="6" width="13" height="13" opacity=".7" />
            <circle cx="991" cy="13" r="7" fill="#6b9fd0" />
            <path d="M903 17q7-16 14 0" stroke="#e0708f" strokeWidth="4" fill="none" />
            <rect x="1114" y="8" width="24" height="10" opacity=".6" />
          </g>
          <g fill="#7fb4d8" opacity=".8"><rect x="682" y="8" width="20" height="9" /><rect x="764" y="8" width="18" height="9" /><rect x="842" y="8" width="20" height="9" /><rect x="922" y="8" width="22" height="9" /><rect x="1003" y="8" width="20" height="9" /><path d="M714 10h8v5h-8zM794 10h8v5h-8zM875 10h8v5h-8zM955 10h8v5h-8zM1036 10h8v5h-8zM632 10h8v5h-8z" /></g>
          <path d="M975 4h78l10 22h-98z" fill="#fff" opacity=".5" />
        </TitleGlow>
        <Logo />
        <TitleText>Session: c:\Program Files\cytoscape-windows-3.3.0-SNAPSHOT\sampleData\galFiltered.cys</TitleText>
        <Caption>
          <CaptionButton $w={34} aria-label="Minimize"><svg width="17" height="14"><rect x=".5" y="8.500" width="16" height="4" rx="1" fill="#fff" stroke="#4d5360" /></svg></CaptionButton>
          <CaptionButton $w={33} aria-label="Restore"><svg width="18" height="17"><path d="M4.500.500h13v13h-3v3H.500v-13h4z" fill="#fff" stroke="#4d5360" /><path d="M4.500 3.500h10v10M4.500 7.500h6v5h-6z" fill="none" stroke="#4d5360" /></svg></CaptionButton>
          <CaptionButton $w={59} aria-label="Exit"><CloseX /></CaptionButton>
        </Caption>
      </TitleBar>
      <MenuBar>
        {["File", "Edit", "View", "Select", "Layout", "Apps", "Tools", "Help"].map((m) => <MenuItem key={m}>{m}</MenuItem>)}
      </MenuBar>
      <ToolBar>
        <ToolButton $w={26} aria-label="Open">
          <svg width="26" height="21" viewBox="0 0 26 21"><path d="M0 17V3q0-2 2-2h6q2 0 2 2v1h9q2 0 2 2v3H8q-2 0-3 2z" fill="#c87516" /><path d="M1 20l6-9q1-1.500 3-1.500h16l-6 9q-1 1.500-3 1.500z" fill="#faae4e" /></svg>
        </ToolButton>
        <ToolButton $w={48} aria-label="Save">
          <svg width="24" height="24" viewBox="0 0 24 24"><path d="M2 0h17l5 5v17q0 2-2 2H2q-2 0-2-2V2q0-2 2-2z" fill="#5690bd" /><path d="M5 1h13v8H5z" fill="#0b3f63" /><path d="M13 2h3v6h-3z" fill="#5690bd" /><path d="M3 13h18v11H3z" fill="#0b3f63" /><path d="M6 15h12v6H6z" fill="#fff" /></svg>
        </ToolButton>
        <Separator />
        <ToolButton $w={37} $c="#e58a22" aria-label="New session"><FaStar size={22} /></ToolButton>
        <ToolButton $c="#5c8fb5" aria-label="Import network"><FaFileImport size={20} /></ToolButton>
        <ToolButton $c="#5c8fb5" aria-label="Import table"><FaTable size={20} /></ToolButton>
        <ToolButton $c="#5c8fb5" aria-label="Export network"><FaFileExport size={22} /></ToolButton>
        <ToolButton $c="#5c8fb5" aria-label="Export image"><FaFileExport size={24} /></ToolButton>
        <ToolButton $c="#6a9cc8" aria-label="Zoom in"><FaSearchPlus size={24} /></ToolButton>
        <ToolButton $c="#6a9cc8" aria-label="Zoom out"><FaSearchMinus size={24} /></ToolButton>
        <ToolButton $c="#6a9cc8" aria-label="Zoom fit"><FaSearch size={24} /></ToolButton>
        <ToolButton $c="#b0cbe4" aria-label="Zoom selected"><FaSearch size={24} /></ToolButton>
        <ToolButton $w={54} $c="#6a9cc8" aria-label="Refresh"><FaSyncAlt size={20} /></ToolButton>
        <ToolButton $w={36} aria-label="Clone network">
          <svg width="25" height="28" viewBox="0 0 25 28" fill="none" stroke="#929292" strokeWidth="1.800"><path d="M6 23H1V1h11l3 3" /><path d="M6 5h11l7 7v15H6z" /><path d="M17 5v7h7M18 18l-5 2.500 6 2.500" /><g fill="#929292" stroke="none"><circle cx="12" cy="20.500" r="2.200" /><circle cx="19" cy="17.500" r="2.200" /><circle cx="19" cy="23.500" r="2.200" /></g></svg>
        </ToolButton>
        <ToolButton aria-label="First neighbors"><FaHome size={16} /><FaHome size={16} /></ToolButton>
        <ToolButton aria-label="Hide selected">
          <svg width="26" height="20" viewBox="0 0 26 20" fill="none" stroke="#929292" strokeWidth="1.800"><path d="M10 17Q4 15 1 10q4-7 12-7.500l3 .5M19 5q4 2 6 5-4 6-9 7.500" /><path d="M17 1L9 19M20 2L12 19" /><path d="M9 7q-2 4 1 7l4-10q-3 0-5 3z" fill="#929292" /></svg>
        </ToolButton>
        <SearchBox aria-label="Search" />
      </ToolBar>
      <Desktop>
        <Frame>
          <FrameTitle>
            <JavaBox><svg width="12" height="12" viewBox="0 0 12 12" fill="none"><path d="M6 0q2 2 0 3t0 3M8 2q-2 1-1 3" stroke="#e06a1a" strokeWidth="1.200" /><path d="M3 8h6M3 10h5M1 11.500h9" stroke="#4a7299" /></svg></JavaBox>
            galFiltered
          </FrameTitle>
          <NetworkCanvas />
        </Frame>
      </Desktop>
      <StatusBar>
        <ListButton aria-label="Task list"><FaListUl /></ListButton>
        <PushButton $w={86} $h={20} $fs={11}><Dot />Memory</PushButton>
      </StatusBar>
      <ControlPanel />
      <ResultsPanel />
      <TablePanel />
    </Shell>
  );
}
